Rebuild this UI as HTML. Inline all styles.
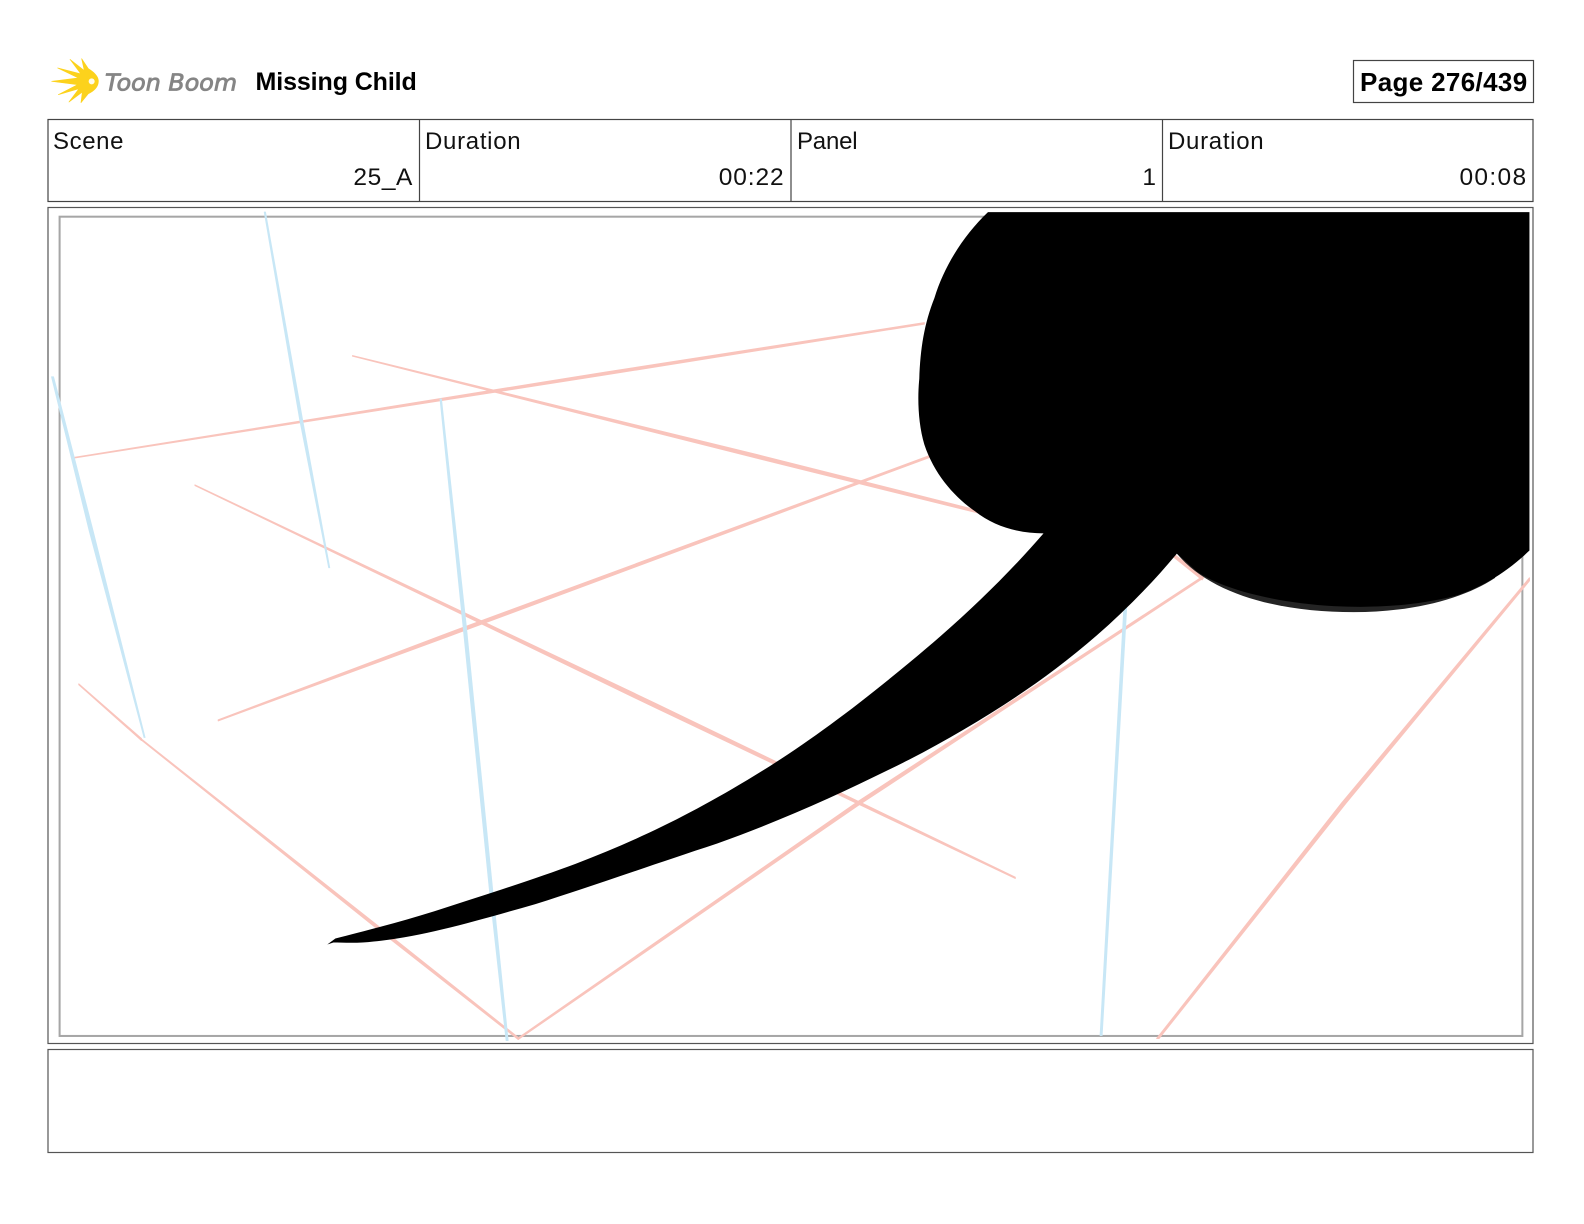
<!DOCTYPE html>
<html>
<head>
<meta charset="utf-8">
<style>
html,body{margin:0;padding:0;background:#fff;width:1584px;height:1224px;overflow:hidden}
body{position:relative;font-family:"Liberation Sans",sans-serif;color:#111}
.t{position:absolute;white-space:nowrap;font-size:24px;line-height:28px;letter-spacing:.6px}
.v{font-size:24.5px;letter-spacing:1px}
.r{text-align:right}
.b{font-weight:bold;font-size:25px;color:#000}
svg{position:absolute;left:0;top:0}
</style>
</head>
<body>
<svg width="1584" height="1224" viewBox="0 0 1584 1224">
  <g transform="translate(45,52) scale(.3333)">
    <path fill="#fcd21c" stroke="#fcd21c" stroke-width="2" stroke-linejoin="round" d="M20,88 L100,78 L38,48 L108,66 L75,22 L118,56 L110,20 L130,50 Q162,70 160,90 Q158,112 130,125 L108,152 L112,120 L72,150 L102,110 L40,128 L98,98 Z"/>
    <circle cx="140" cy="88" r="9" fill="#fff" opacity=".9"/>
  </g>
  <text x="105" y="90.5" font-family="DejaVu Sans" font-size="23.5" font-style="italic" fill="#858585" stroke="#858585" stroke-width=".85" textLength="132" lengthAdjust="spacingAndGlyphs">Toon Boom</text>

  <rect x="1353.5" y="60.5" width="180" height="42" fill="none" stroke="#444" stroke-width="1.2"/>
  <rect x="48" y="119.5" width="1485" height="82" fill="none" stroke="#444" stroke-width="1.2"/>
  <path d="M419.5 119.5V201.5M791 119.5V201.5M1162.5 119.5V201.5" stroke="#444" stroke-width="1.2"/>
  <rect x="48" y="207.5" width="1485" height="836" fill="none" stroke="#555" stroke-width="1.2"/>
  <rect x="48" y="1049.5" width="1485" height="103" fill="none" stroke="#555" stroke-width="1.2"/>

  <g transform="scale(1.0102)">
    <rect x="59" y="214.5" width="1448" height="811" fill="none" stroke="#a6a6a6" stroke-width="2"/>
    <g fill="#f9c4bc" stroke="#f9c4bc" stroke-width="1" stroke-linejoin="round">
      <polygon points="72,453 600,368.2 915,319.4 915,320.8 600,371 72,453.6"/>
      <polygon points="349,352 750,450.2 975,507 975,509.5 750,453.8 349,352.6"/>
      <polygon points="193,480 650,696.8 1005,868.4 1005,869.6 650,701.2 193,480.6"/>
      <polygon points="216,712.6 450,624.2 925,449.2 925,451 450,627.8 216,713.6"/>
      <polygon points="78,677 140,731 140,733 78,677.8"/>
      <polygon points="140,731.6 370,913.2 513,1027 513,1029 370,916.8 140,732.6"/>
      <polygon points="513,1027.4 850,793 1190,571 1190,573 850,797 513,1029"/>
      <polygon points="1145,1028 1328,795 1514,572 1514,575 1332.5,795 1147.4,1028"/>
      <polygon points="1160,547 1192,571 1190,574 1160,550"/>
    </g>
    <g fill="#c8e7f6" stroke="#c8e7f6" stroke-width=".9" stroke-linejoin="round">
      <polygon points="261.6,210 296.6,415 325.4,562 326.4,562 299.4,415 262.8,210"/>
      <polygon points="51,373 88.2,525 142.6,730 143.6,730 92,525 53,373"/>
      <polygon points="435.6,395 458.4,620 484.4,880 501,1030 503,1030 487.6,880 461.6,620 437,395"/>
      <polygon points="1112.6,600 1089,1025 1091,1025 1115.4,600"/>
    </g>
    <path fill="#242424" d="M1165 548C1200 590 1270 606 1340 606C1400 606 1450 592 1480 572L1480 500L1165 500Z"/>
    <path fill="#000" d="M978 210L1514 210L1514 545C1490 568 1465 582 1440 590C1400 600 1360 602 1320 600C1270 597 1215 586 1185 566L1165 548C1130 590 1090 628 1045 662C1000 696 950 726 900 752C840 782 780 810 710 835C640 858 590 876 530 895C470 912 420 927 370 932C355 934 340 933 330 933L324 935L332 929C360 922 395 913 430 902C480 886 530 870 570 855C630 832 680 808 740 772C790 742 840 706 900 656C950 615 995 572 1033 528C1010 528 985 522 965 506C945 492 925 470 915 440C909 420 908 395 910 375C911 345 915 320 925 295C935 262 955 232 978 210Z"/>
  </g>
</svg>

<div class="t b" style="left:255.5px;top:68px;letter-spacing:-.1px">Missing Child</div>
<div class="t b" style="left:1360px;top:68px;font-size:26px;letter-spacing:.35px">Page 276/439</div>

<div class="t" style="left:53px;top:128px">Scene</div>
<div class="t v r" style="left:200px;width:213px;top:164px;letter-spacing:.6px">25_A</div>
<div class="t" style="left:425px;top:128px;letter-spacing:.7px">Duration</div>
<div class="t v r" style="left:600px;width:184.5px;top:164px;letter-spacing:.9px">00:22</div>
<div class="t" style="left:797px;top:128px;letter-spacing:-.2px">Panel</div>
<div class="t v r" style="left:1000px;width:156px;top:164px;letter-spacing:0">1</div>
<div class="t" style="left:1168px;top:128px;letter-spacing:.7px">Duration</div>
<div class="t v r" style="left:1300px;width:227.5px;top:164px;letter-spacing:1.35px">00:08</div>
</body>
</html>
